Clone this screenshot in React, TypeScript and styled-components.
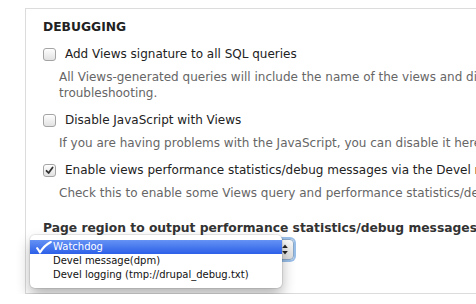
import React from 'react';
import styled, { createGlobalStyle } from 'styled-components';

const GlobalStyle = createGlobalStyle`
  html, body {
    margin: 0;
    padding: 0;
    background: #fff;
    overflow: hidden;
  }
  body {
    font-family: 'DejaVu Sans', 'Liberation Sans', sans-serif;
    color: #333;
  }
`;

const Page = styled.div`
  width: 1400px;
  padding: 8px 0 0 25px;
`;

const Fieldset = styled.div`
  border: 1px solid #dcdcdc;
  padding: 10px 17px 33px;
`;

const Heading = styled.div`
  font-size: 12.3px;
  line-height: 16px;
  font-weight: bold;
  color: #222;
  margin-bottom: 11px;
`;

const Item = styled.div`
  margin-bottom: 11px;
`;

const CheckRow = styled.label`
  display: flex;
  align-items: center;
  gap: 9px;
  font-size: 12px;
  line-height: 16px;
  color: #222;
  white-space: nowrap;
`;

const Box = styled.span`
  width: 11px;
  height: 11px;
  border: 1px solid #a4a4a4;
  border-radius: 3px;
  background: linear-gradient(#fdfdfd, #e2e2e2);
  box-shadow: inset 0 1px 1px rgba(255, 255, 255, 0.8);
  display: flex;
  align-items: center;
  justify-content: center;
  flex: none;
`;

const Description = styled.div`
  margin: 7px 0 0 16px;
  font-size: 12px;
  line-height: 16px;
  color: #666;
  white-space: nowrap;
`;

const RegionLabel = styled.div`
  margin-top: 19px;
  font-size: 12.3px;
  line-height: 16px;
  font-weight: bold;
  color: #333;
  white-space: nowrap;
`;

const SelectWrap = styled.div`
  position: relative;
  margin-top: 3px;
  width: 251px;
  height: 21px;
`;

const Select = styled.div`
  box-sizing: border-box;
  width: 100%;
  height: 100%;
  border: 1px solid #8aa8c8;
  border-radius: 4px;
  background: linear-gradient(#fafafa, #dedede);
  box-shadow: 0 0 0 2px rgba(120, 170, 225, 0.75);
  display: flex;
  align-items: center;
  justify-content: flex-end;
  padding-right: 5px;
`;

const Menu = styled.div`
  position: absolute;
  left: -13px;
  top: -4px;
  width: 252px;
  padding: 5px 0 6px;
  background: #fff;
  border-radius: 5px;
  box-shadow: 0 0 0 1px rgba(0, 0, 0, 0.08), 0 7px 14px rgba(0, 0, 0, 0.3);
  font-size: 10px;
`;

const MenuItem = styled.div<{ $active?: boolean }>`
  position: relative;
  height: 14px;
  line-height: 14px;
  padding-left: 23px;
  color: ${(p) => (p.$active ? '#fff' : '#111')};
  background: ${(p) => (p.$active ? 'linear-gradient(#6592f4, #2c5fe8)' : 'transparent')};
  white-space: nowrap;
`;

const Tick = styled.svg`
  position: absolute;
  left: 6px;
  top: 1px;
`;

const CheckMark = () => (
  <svg width="9" height="9" viewBox="0 0 9 9">
    <path d="M1.5 4.8 L3.6 7 L7.6 1.5" fill="none" stroke="#333" strokeWidth="1.8" strokeLinecap="round" strokeLinejoin="round" />
  </svg>
);

const MenuTick = () => (
  <Tick width="16" height="13" viewBox="0 0 16 13">
    <path d="M1.2 7.2 Q2.6 8.6 4 11.6 Q8 4.5 14.8 1" fill="none" stroke="#fff" strokeWidth="2.1" strokeLinecap="round" strokeLinejoin="round" />
  </Tick>
);

const Arrows = () => (
  <svg width="6" height="11" viewBox="0 0 6 11">
    <path d="M3 0.5 L5.8 4 L0.2 4 Z" fill="#222" />
    <path d="M3 10.5 L5.8 7 L0.2 7 Z" fill="#222" />
  </svg>
);

interface Option {
  label: string;
  description: React.ReactNode;
  checked?: boolean;
}

const options: Option[] = [
  {
    label: 'Add Views signature to all SQL queries',
    description: (
      <>
        All Views-generated queries will include the name of the views and display 'view-name:display-name' as a
        string at the end of the SELECT query. This makes identifying Views queries in database server logs simpler,
        but should only be used when
        <br />
        troubleshooting.
      </>
    ),
  },
  {
    label: 'Disable JavaScript with Views',
    description:
      'If you are having problems with the JavaScript, you can disable it here. The Views UI should degrade and still be usable without javascript; it\u2019s just not as good.',
  },
  {
    label: 'Enable views performance statistics/debug messages via the Devel module',
    description:
      'Check this to enable some Views query and performance statistics/debug messages if Devel is installed.',
    checked: true,
  },
];

function App() {
  return (
    <>
      <GlobalStyle />
      <Page>
        <Fieldset>
          <Heading>DEBUGGING</Heading>
          {options.map((o) => (
            <Item key={o.label}>
              <CheckRow>
                <Box>{o.checked && <CheckMark />}</Box>
                {o.label}
              </CheckRow>
              <Description>{o.description}</Description>
            </Item>
          ))}
          <RegionLabel>Page region to output performance statistics/debug messages:</RegionLabel>
          <SelectWrap>
            <Select>
              <Arrows />
            </Select>
            <Menu>
              <MenuItem $active>
                <MenuTick />
                Watchdog
              </MenuItem>
              <MenuItem>Devel message(dpm)</MenuItem>
              <MenuItem>Devel logging (tmp://drupal_debug.txt)</MenuItem>
            </Menu>
          </SelectWrap>
        </Fieldset>
      </Page>
    </>
  );
}

export default App;
